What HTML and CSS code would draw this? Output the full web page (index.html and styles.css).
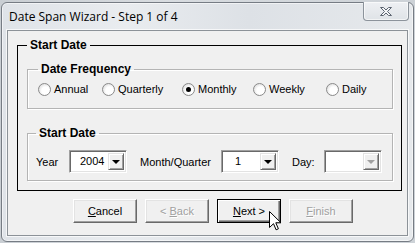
FILE: index.html
```html
<!DOCTYPE html>
<html>
<head>
<meta charset="utf-8">
<title>Date Span Wizard</title>
<link rel="stylesheet" href="styles.css">
</head>
<body>
<div class="window">
  <div class="titlebar">
    <span class="title">Date Span Wizard - Step 1 of 4</span>
    <div class="close">
      <svg width="14" height="11" viewBox="0 0 14 11"><path d="M1.5 1.5h3l2.5 2.5 2.5-2.5h3l-4 4 4 4h-3l-2.5-2.5-2.5 2.5h-3l4-4z" fill="#f4f6f8" stroke="#5c6470" stroke-width="1" stroke-linejoin="round"/></svg>
    </div>
  </div>
  <div class="client">
    <fieldset class="group outer">
      <legend>Start Date</legend>
      <fieldset class="group sub freq">
        <legend>Date Frequency</legend>
        <div class="radios">
          <label class="opt opt-annual"><span class="radio"></span>Annual</label>
          <label class="opt opt-quarterly"><span class="radio"></span>Quarterly</label>
          <label class="opt opt-monthly"><span class="radio checked"></span>Monthly</label>
          <label class="opt opt-weekly"><span class="radio"></span>Weekly</label>
          <label class="opt opt-daily"><span class="radio"></span>Daily</label>
        </div>
      </fieldset>
      <fieldset class="group sub start">
        <legend>Start Date</legend>
        <div class="fields">
          <span class="lbl lbl-year">Year</span>
          <div class="combo combo-year"><span class="val">2004</span><span class="drop"><i class="arrow"></i></span></div>
          <span class="lbl lbl-month">Month/Quarter</span>
          <div class="combo combo-month"><span class="val">1</span><span class="drop"><i class="arrow"></i></span></div>
          <span class="lbl lbl-day">Day:</span>
          <div class="combo combo-day disabled"><span class="val"></span><span class="drop"><i class="arrow"></i></span></div>
        </div>
      </fieldset>
    </fieldset>
    <div class="buttons">
      <button class="btn"><u>C</u>ancel</button>
      <button class="btn" disabled>&lt; <u>B</u>ack</button>
      <button class="btn default"><u>N</u>ext &gt;</button>
      <button class="btn" disabled><u>F</u>inish</button>
    </div>
  </div>
</div>
<svg class="cursor" width="13" height="21" viewBox="0 0 13 21"><path d="M0.5 0.5v16l4-3.8 2.6 6.1 2.3-1-2.6-6h5.2z" fill="#fff" stroke="#000" stroke-width="1" stroke-linejoin="miter"/></svg>
</body>
</html>
```

FILE: styles.css
```css
html, body {
  margin: 0;
  padding: 0;
}
body {
  width: 415px;
  height: 243px;
  overflow: hidden;
  position: relative;
  background: linear-gradient(90deg, #c9ced3, #d8dce0 40%, #cdd2d7);
  font-family: "Liberation Sans", Arial, sans-serif;
  font-size: 11px;
  color: #000;
}
.window {
  box-sizing: border-box;
  margin: 2px 0 0 1px;
  width: 413px;
  height: 240px;
  border: 1px solid #767c84;
  border-radius: 6px;
  background: linear-gradient(90deg, #dfe3e8 0%, #e9ecef 30%, #dde1e6 60%, #e6e9ec 100%);
  box-shadow: inset 0 0 0 1px rgba(255, 255, 255, 0.55);
  display: flex;
  flex-direction: column;
}
.titlebar {
  height: 27px;
  display: flex;
  align-items: flex-start;
  justify-content: space-between;
  padding-left: 7px;
}
.title {
  font-family: "Open Sans", "Noto Sans", sans-serif;
  font-size: 12px;
  line-height: 14px;
  margin-top: 7px;
  color: #000;
}
.close {
  box-sizing: border-box;
  width: 46px;
  height: 19px;
  margin-right: 4px;
  margin-top: -1px;
  border: 1px solid #8c939b;
  border-top: none;
  border-radius: 0 0 4px 4px;
  background: linear-gradient(#eef0f3, #dfe3e7);
  box-shadow: inset 0 0 0 1px rgba(255, 255, 255, 0.6);
  display: flex;
  align-items: center;
  justify-content: center;
}
.close svg { display: block; margin-top: 1px; }

.client {
  box-sizing: border-box;
  margin: 0 5px 5px 5px;
  flex: 1;
  border: 1px solid #8c9298;
  box-shadow: 0 0 0 1px rgba(255, 255, 255, 0.7);
  background: #f0f0f0;
  display: flex;
  flex-direction: column;
}

.group {
  margin: 0;
  min-width: 0;
}
.group legend {
  font-weight: bold;
  font-size: 12px;
  line-height: 14px;
  padding: 0 3px;
}
.outer {
  margin: 7px 5px 0 9px;
  border: 1px solid #000;
  padding: 10px 8px 9px 9px;
}
.sub {
  border: 1px solid #b4b4b4;
  box-shadow: inset 1px 1px #fff, 1px 1px #fff;
}
.freq {
  padding: 7px 0 12px 10px;
}
.radios {
  display: flex;
  align-items: center;
  height: 13px;
}
.opt {
  display: flex;
  align-items: center;
  line-height: 13px;
  white-space: nowrap;
}
.opt-annual { width: 64px; }
.opt-quarterly { width: 80px; }
.opt-monthly { width: 71px; }
.opt-weekly { width: 73px; }
.opt-daily { width: 50px; }
.radio {
  box-sizing: border-box;
  width: 13px;
  height: 13px;
  border-radius: 50%;
  border: 1px solid #8a8a8a;
  background: radial-gradient(circle at 60% 60%, #ffffff 0 40%, #e6e6e6 70%, #c8c8c8 100%);
  margin-right: 3px;
  position: relative;
}
.radio.checked::after {
  content: "";
  position: absolute;
  left: 3px;
  top: 3px;
  width: 5px;
  height: 5px;
  border-radius: 50%;
  background: #000;
}

.start {
  margin-top: 17px;
  padding: 10px 0 7px 8px;
}
.fields {
  display: flex;
  align-items: center;
  height: 23px;
}
.lbl { white-space: nowrap; line-height: 13px; padding-top: 2px; }
.lbl-year { width: 33px; }
.lbl-month { width: 81px; margin-left: 13px; }
.lbl-day { width: 32px; margin-left: 13px; }

.combo {
  box-sizing: border-box;
  width: 58px;
  height: 23px;
  background: #fff;
  border: 1px solid;
  border-color: #a0a0a0 #ffffff #ffffff #a0a0a0;
  box-shadow: inset 1px 1px #696969, inset -1px -1px #e3e3e3;
  display: flex;
  padding: 2px 2px 2px 2px;
}
.combo .val {
  flex: 1;
  line-height: 17px;
  padding-left: 8px;
  font-size: 11px;
}
.combo-month .val { padding-left: 11px; }
.drop {
  box-sizing: border-box;
  width: 16px;
  height: 17px;
  background: #f0f0f0;
  border: 1px solid;
  border-color: #e3e3e3 #696969 #696969 #e3e3e3;
  box-shadow: inset 1px 1px #fff, inset -1px -1px #a0a0a0;
  display: flex;
  align-items: center;
  justify-content: center;
}
.arrow {
  width: 0;
  height: 0;
  border-left: 4px solid transparent;
  border-right: 4px solid transparent;
  border-top: 4px solid #000;
  margin-top: 1px;
}
.disabled .arrow { border-top-color: #a0a0a0; }

.buttons {
  display: flex;
  gap: 8px;
  padding-left: 65px;
  margin-top: 8px;
}
.btn {
  box-sizing: border-box;
  width: 64px;
  height: 24px;
  margin: 0;
  padding: 0;
  font-family: "Liberation Sans", Arial, sans-serif;
  font-size: 11px;
  color: #000;
  background: #f0f0f0;
  border: 1px solid;
  border-color: #ffffff #696969 #696969 #ffffff;
  box-shadow: inset -1px -1px #a0a0a0, inset 1px 1px #e3e3e3;
  border-radius: 0;
}
.btn:disabled {
  color: #a0a0a0;
  text-shadow: 1px 1px #fff;
}
.btn.default {
  border-color: #000;
  box-shadow: inset 1px 1px #fff, inset -1px -1px #696969, inset -2px -2px #a0a0a0;
}
.cursor {
  position: absolute;
  left: 269px;
  top: 211px;
}
```
